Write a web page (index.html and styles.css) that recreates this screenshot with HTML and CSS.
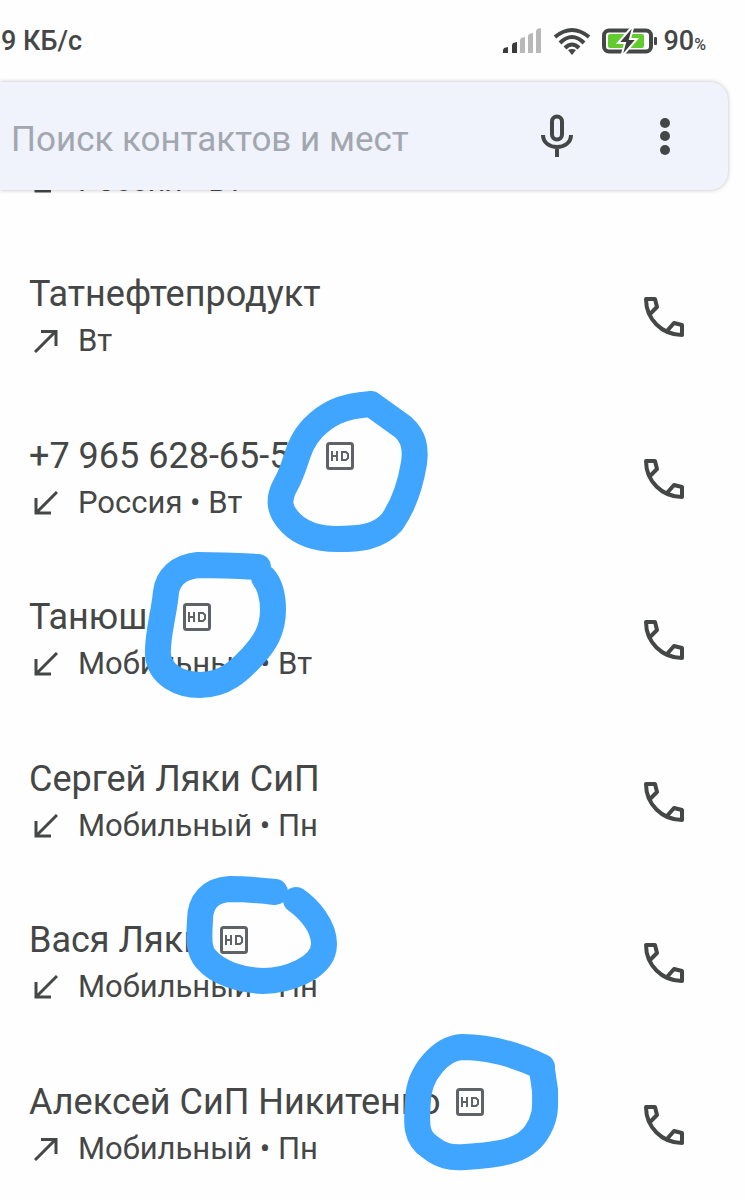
FILE: index.html
```html
<!DOCTYPE html>
<html lang="ru">
<head>
    <meta charset="UTF-8">
    <meta name="viewport" content="width=device-width, initial-scale=1.0">
    <title>Телефон</title>
    <link rel="stylesheet" href="styles.css">
</head>
<body>
    <svg class="sprite" aria-hidden="true">
        <symbol id="call" viewBox="0 0 42 42">
            <path d="M7 18l7-7-2-8H3c0 20 16 36 36 36v-10l-8-2-7 8" />
        </symbol>
        <symbol id="hd" viewBox="0 0 28 28">
            <rect x="1.5" y="1.5" width="25" height="25" rx="2" />
            <path stroke-width="2" d="M6 9v10M11 9v10M6 14h5M16 10h4l2 2v4l-2 2h-4z" />
        </symbol>
        <symbol id="out" viewBox="0 0 24 24">
            <path d="M1 23L21 3M7 2.500h15V17" />
        </symbol>
        <symbol id="in" viewBox="0 0 24 24">
            <path d="M23 1L3 21M2 7v15h15" />
        </symbol>
    </svg>

    <header class="top">
        <div class="status">
            <span class="speed">9 КБ/с</span>
            <div class="indicators">
                <svg class="signal" viewBox="0 0 40 26">
                    <path class="dark" d="M1 25v-3l1-2 4-1v6zM10 25V17l1-2 4-1v11z" />
                    <path class="light" d="M18 25V12l1-2 4-1v16zM26 25V8l1-2 4-1v20zM34 25V3l1-2 4-1v25z" />
                </svg>
                <svg class="wifi" viewBox="0 0 38 28">
                    <path d="M2 10Q19-4 36 10M7 16Q19 4 31 16M12 21Q19 14 26 21" />
                    <path class="dot" d="M15 23q4-2 8 0l-4 5z" />
                </svg>
                <svg class="battery" viewBox="0 0 56 26">
                    <rect class="case" x="2" y="2.500" width="47" height="21" rx="5" />
                    <rect class="tip" x="52" y="9" width="3" height="8" rx="1" />
                    <rect class="charge" x="6" y="6" width="36" height="14" rx="2" />
                    <path class="bolt" d="M29 0L16 15h7l-3 11h2L35 11h-7l3-11z" />
                </svg>
                <span class="percent">90<small>%</small></span>
            </div>
        </div>
        <form class="search">
            <input type="text" placeholder="Поиск контактов и мест" aria-label="Поиск контактов и мест">
            <button type="button" aria-label="Голосовой поиск">
                <svg class="mic" viewBox="0 0 32 44">
                    <rect x="11" y="2.500" width="10" height="23" rx="5" />
                    <path d="M2 21c0 16 28 16 28 0M16 33v10" />
                </svg>
            </button>
            <button type="button" aria-label="Меню">
                <svg class="dots" viewBox="0 0 10 38">
                    <circle cx="5" cy="6" r="5" /><circle cx="5" cy="19" r="5" /><circle cx="5" cy="33" r="5" />
                </svg>
            </button>
        </form>
    </header>

    <ul class="calls">
        <li class="call">
            <div class="info">
                <div class="detail"><svg><use href="#in" /></svg>Россия • Вт</div>
            </div>
        </li>
        <li class="call">
            <div class="info">
                <div class="name">Татнефтепродукт</div>
                <div class="detail"><svg><use href="#out" /></svg>Вт</div>
            </div>
            <button type="button" class="dial" aria-label="Позвонить"><svg><use href="#call" /></svg></button>
        </li>
        <li class="call">
            <div class="info">
                <div class="name">+7 965 628-65-50 <svg><use href="#hd" /></svg></div>
                <div class="detail"><svg><use href="#in" /></svg>Россия • Вт</div>
            </div>
            <button type="button" class="dial" aria-label="Позвонить"><svg><use href="#call" /></svg></button>
        </li>
        <li class="call">
            <div class="info">
                <div class="name">Танюша <svg><use href="#hd" /></svg></div>
                <div class="detail"><svg><use href="#in" /></svg>Мобильный • Вт</div>
            </div>
            <button type="button" class="dial" aria-label="Позвонить"><svg><use href="#call" /></svg></button>
        </li>
        <li class="call">
            <div class="info">
                <div class="name">Сергей Ляки СиП</div>
                <div class="detail"><svg><use href="#in" /></svg>Мобильный • Пн</div>
            </div>
            <button type="button" class="dial" aria-label="Позвонить"><svg><use href="#call" /></svg></button>
        </li>
        <li class="call">
            <div class="info">
                <div class="name">Вася Ляки <svg><use href="#hd" /></svg></div>
                <div class="detail"><svg><use href="#in" /></svg>Мобильный • Пн</div>
            </div>
            <button type="button" class="dial" aria-label="Позвонить"><svg><use href="#call" /></svg></button>
        </li>
        <li class="call">
            <div class="info">
                <div class="name">Алексей СиП Никитенко <svg><use href="#hd" /></svg></div>
                <div class="detail"><svg><use href="#out" /></svg>Мобильный • Пн</div>
            </div>
            <button type="button" class="dial" aria-label="Позвонить"><svg><use href="#call" /></svg></button>
        </li>
    </ul>

    <!-- marker circles around the HD badges -->
    <svg class="marker" viewBox="0 0 600 1200" aria-hidden="true">
        <path d="M371 404C340 406 326 415 313 428C296 446 298 462 286 484C277 500 279 511 291 523C303 535 320 539 337 539C358 539 378 538 392 522C403 506 410 488 414 463C416 448 414 437 403 427L371 404" />
        <path d="M258 567C240 566 215 565 198 565C178 567 168 578 166 592C164 615 157 635 158 655C160 675 180 685 200 685C225 685 240 670 252 657C265 643 273 630 273 610C273 598 270 585 264 578" />
        <path d="M275 892C258 890 243 889 230 889C210 890 200 902 200 920C199 937 198 950 206 959C218 973 240 980 263 981C285 981 324 969 324 944C324 926 309 909 296 900" />
        <path d="M542 1067C515 1054 487 1047 462 1047C442 1048 419 1072 418 1100C416 1125 416 1138 430 1147C441 1156 450 1158 465 1157C500 1155 524 1151 536 1133C547 1117 545 1105 545 1090L542 1070" />
    </svg>
</body>
</html>
```
FILE: styles.css
```css
* {
    box-sizing: border-box;
}
body {
    margin: 0;
    background-color: #fefefe;
    color: #444746;
    font-family: Roboto, sans-serif;
    position: relative;
}
svg {
    fill: none;
    stroke: currentColor;
    flex: none;
}
button {
    border: none;
    padding: 0;
    background: none;
    color: inherit;
    cursor: pointer;
    display: flex;
    align-items: center;
    justify-content: center;
}
.sprite {
    display: none;
}
.top {
    position: relative;
    z-index: 1;
    background-color: #fefefe;
}
.status {
    height: 82px;
    padding: 0 39px 0 1px;
    display: flex;
    align-items: center;
    justify-content: space-between;
    font-size: 27px;
    font-weight: 500;
}
.indicators {
    display: flex;
    align-items: center;
    gap: 11px;
}
.signal {
    width: 40px;
    height: 26px;
    stroke: none;
}
.signal .dark {
    fill: #3c3c3c;
}
.signal .light {
    fill: #b8b8b8;
}
.wifi {
    width: 38px;
    height: 28px;
    stroke-width: 4;
}
.wifi .dot {
    fill: currentColor;
    stroke: none;
}
.battery {
    width: 56px;
    height: 26px;
}
.case {
    stroke-width: 4;
}
.tip {
    fill: currentColor;
    stroke: none;
}
.charge {
    fill: #62cc2f;
    stroke: none;
}
.bolt {
    fill: #3c3c3c;
    stroke: #fefefe;
    stroke-width: 2;
}
.percent {
    margin-left: -5px;
}
.percent small {
    font-size: 16px;
}
.search {
    height: 108px;
    margin-right: 17px;
    padding-right: 36px;
    display: flex;
    align-items: center;
    background-color: #f0f3fb;
    border-radius: 0 18px 18px 0;
    box-shadow: 0 0 4px rgba(0, 0, 0, 0.25);
}
.search input {
    flex: 1;
    min-width: 0;
    height: 64px;
    padding: 6px 0 0 11px;
    border: none;
    outline: none;
    background: none;
    font-family: inherit;
    font-size: 35px;
    color: #444746;
}
.search input::placeholder {
    color: #a2a6ae;
}
.search button {
    width: 54px;
    height: 64px;
}
.search button + button {
    margin-left: 54px;
}
.mic {
    width: 32px;
    height: 44px;
    stroke-width: 4;
}
.dots {
    width: 10px;
    height: 38px;
    fill: currentColor;
    stroke: none;
}
.calls {
    list-style: none;
    margin: -66px 0 0;
    padding: 0;
}
.call {
    display: flex;
    align-items: center;
    justify-content: space-between;
    padding: 34px 60px 34px 29px;
}
.call:nth-child(odd) {
    padding-bottom: 33px;
}
.call:first-child {
    padding-bottom: 32px;
}
.name,
.detail {
    display: flex;
    align-items: center;
    white-space: nowrap;
}
.name {
    gap: 16px;
    font-size: 36px;
    line-height: 48px;
}
.name svg {
    width: 28px;
    height: 28px;
    color: #5f6368;
    stroke-width: 3;
}
.detail {
    gap: 20px;
    padding-left: 5px;
    font-size: 31px;
    line-height: 46px;
}
.detail svg {
    width: 24px;
    height: 24px;
    stroke-width: 3;
}
.dial svg {
    width: 42px;
    height: 42px;
    stroke-width: 4;
    stroke-linejoin: round;
}
.marker {
    position: absolute;
    top: 0;
    left: 0;
    z-index: 2;
    width: 600px;
    height: 1200px;
    color: #40a5ff;
    stroke-width: 26;
    stroke-linecap: round;
    stroke-linejoin: round;
    pointer-events: none;
}
```
